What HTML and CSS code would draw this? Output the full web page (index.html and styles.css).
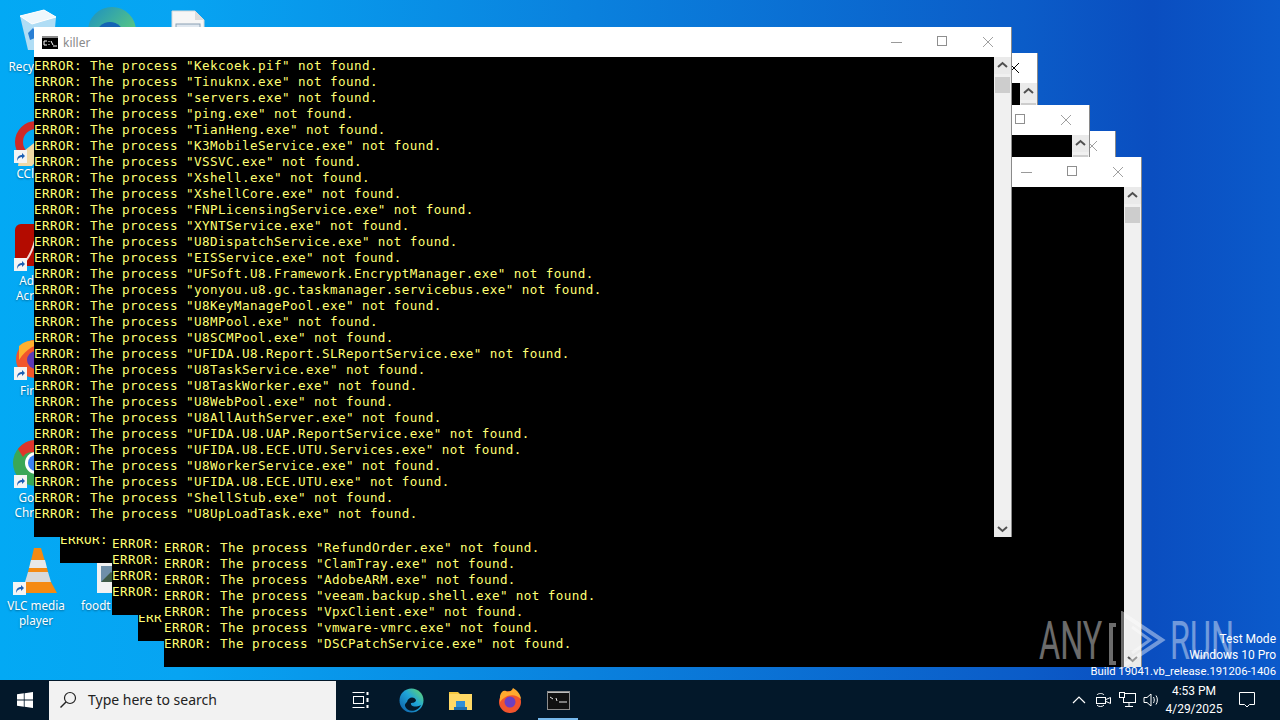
FILE: index.html
```html
<!DOCTYPE html>
<html lang="en">
<head>
    <meta charset="UTF-8">
    <title>killer</title>
    <link rel="stylesheet" href="styles.css">
</head>
<body>

    <div class="desktop">

        <div class="desk-icon clipped icon-bin">
            <svg width="40" height="42" viewBox="0 0 40 42">
                <path d="M2 7 L26 1 L38 8 L35 41 L10 41 Z" fill="#cfe6f5" fill-opacity="0.85"/>
                <path d="M2 7 L26 1 L38 8 L14 15 Z" fill="#eef7fc" stroke="#ffffff"/>
                <path d="M10 24 L15 19 L19 24 L16 25 L17 29 L12 31 Z" fill="#2a7fd4"/>
                <path d="M20 22 L25 24 L24 30 L19 30 Z" fill="#2a7fd4"/>
            </svg>
            <span>Recy</span>
        </div>

        <div class="desk-icon icon-edge">
            <svg width="50" height="50" viewBox="0 0 50 50">
                <defs>
                    <linearGradient id="edgeTop" x1="0" y1="0" x2="1" y2="1">
                        <stop offset="0" stop-color="#1b8fc4"/>
                        <stop offset="1" stop-color="#6fdc6a"/>
                    </linearGradient>
                </defs>
                <circle cx="25" cy="25" r="24" fill="url(#edgeTop)"/>
                <circle cx="23" cy="30" r="14" fill="#1464b4"/>
            </svg>
        </div>

        <div class="desk-icon icon-doc">
            <svg width="34" height="40" viewBox="0 0 34 40">
                <path d="M1 1 H24 L33 10 V39 H1 Z" fill="#f6f6f6" stroke="#d8d8d8"/>
                <path d="M24 1 V10 H33" fill="#dcdcdc"/>
                <rect x="5" y="14" width="24" height="16" fill="#dfe7ef" stroke="#8aa0b4"/>
            </svg>
        </div>

        <div class="desk-icon clipped icon-ccleaner">
            <svg class="tile" width="40" height="50" viewBox="0 0 40 50">
                <circle cx="24" cy="22" r="17" fill="none" stroke="#cf2a27" stroke-width="8"/>
                <path d="M8 34 L26 20 L34 30 L20 46 L6 46 Z" fill="#f1d9a6"/>
            </svg>
            <svg class="shortcut" width="13" height="13" viewBox="0 0 13 13"><rect width="13" height="13" fill="#f4f4f4"/><path d="M3 11 C3 7 5 5 8 5 V3 L11 6 L8 9 V7 C6 7 4 8 3 11 Z" fill="#1c5fb4"/></svg>
            <span>CCl</span>
        </div>

        <div class="desk-icon clipped icon-adobe">
            <svg class="tile" width="40" height="42" viewBox="0 0 40 42">
                <rect x="0" y="0" width="40" height="42" rx="6" fill="#b30b00"/>
                <path d="M10 38 C16 30 20 20 21 10" fill="none" stroke="#f3d9d5" stroke-width="2"/>
            </svg>
            <svg class="shortcut" width="13" height="13" viewBox="0 0 13 13"><rect width="13" height="13" fill="#f4f4f4"/><path d="M3 11 C3 7 5 5 8 5 V3 L11 6 L8 9 V7 C6 7 4 8 3 11 Z" fill="#1c5fb4"/></svg>
            <span>Ad<br>Acr</span>
        </div>

        <div class="desk-icon clipped icon-firefox">
            <svg class="tile" width="40" height="40" viewBox="0 0 40 40">
                <circle cx="20" cy="21" r="19" fill="#f2552c"/>
                <path d="M4 8 C10 2 22 0 30 6 C20 6 12 10 4 22 Z" fill="#ffb02e"/>
                <circle cx="21" cy="22" r="9" fill="#5b3bb5"/>
            </svg>
            <svg class="shortcut" width="13" height="13" viewBox="0 0 13 13"><rect width="13" height="13" fill="#f4f4f4"/><path d="M3 11 C3 7 5 5 8 5 V3 L11 6 L8 9 V7 C6 7 4 8 3 11 Z" fill="#1c5fb4"/></svg>
            <span>Fir</span>
        </div>

        <div class="desk-icon clipped icon-chrome">
            <svg class="tile" width="46" height="46" viewBox="0 0 46 46">
                <circle cx="23" cy="23" r="23" fill="#3aa757"/>
                <path d="M23 0 A23 23 0 0 1 44 14 L23 14 A9 9 0 0 0 10 17 L5 9 A23 23 0 0 1 23 0 Z" fill="#e0352b"/>
                <circle cx="23" cy="23" r="11" fill="#ffffff"/>
                <circle cx="23" cy="23" r="8" fill="#3c82f0"/>
            </svg>
            <svg class="shortcut" width="13" height="13" viewBox="0 0 13 13"><rect width="13" height="13" fill="#f4f4f4"/><path d="M3 11 C3 7 5 5 8 5 V3 L11 6 L8 9 V7 C6 7 4 8 3 11 Z" fill="#1c5fb4"/></svg>
            <span>Go<br>Chr</span>
        </div>

        <div class="desk-icon icon-vlc">
            <svg class="tile" width="38" height="46" viewBox="0 0 38 46">
                <path d="M15 0 H22 L27 17 H11 Z" fill="#f58a12"/>
                <path d="M12 12 H26 L28 20 H10 Z" fill="#e8e8e8"/>
                <path d="M9 24 H29 L32 34 H6 Z" fill="#d9d9d9"/>
                <path d="M10 20 H28 L29 24 H9 Z" fill="#f58a12"/>
                <path d="M6 34 H32 L38 45 H0 Z" fill="#f58a12"/>
            </svg>
            <svg class="shortcut" width="13" height="13" viewBox="0 0 13 13"><rect width="13" height="13" fill="#f4f4f4"/><path d="M3 11 C3 7 5 5 8 5 V3 L11 6 L8 9 V7 C6 7 4 8 3 11 Z" fill="#1c5fb4"/></svg>
            <span>VLC media<br>player</span>
        </div>

        <div class="desk-icon icon-food">
            <svg class="tile" width="34" height="30" viewBox="0 0 34 30">
                <rect width="34" height="30" fill="#f2f2f2"/>
                <rect x="4" y="3" width="26" height="16" fill="#6f8fa8"/>
                <path d="M4 19 L14 9 L22 16 L30 11 V19 Z" fill="#3f5a46"/>
            </svg>
            <span>foodt</span>
        </div>

        <div class="window win-2">
            <div class="titlebar">
                <div class="win-buttons">
                    <span class="btn-min"></span>
                    <span class="btn-max"></span>
                    <svg class="btn-close dark" width="46" height="30" viewBox="0 0 46 30"><path d="M18 10 L28 20 M28 10 L18 20"/></svg>
                </div>
            </div>
            <div class="console">
                <div class="log">
                    <p>ERROR:</p>
                    <p>&nbsp;</p>
                </div>
                <div class="scrollbar">
                    <svg class="arrow" width="17" height="17" viewBox="0 0 17 17"><path d="M4 10 L8.500 6 L13 10"/></svg>
                    <div class="thumb"></div>
                    <svg class="arrow" width="17" height="17" viewBox="0 0 17 17"><path d="M4 7 L8.500 11 L13 7"/></svg>
                </div>
            </div>
        </div>

        <div class="window win-4">
            <div class="titlebar">
                <div class="win-buttons">
                    <span class="btn-min"></span>
                    <span class="btn-max"></span>
                    <svg class="btn-close" width="46" height="30" viewBox="0 0 46 30"><path d="M18 10 L28 20 M28 10 L18 20"/></svg>
                </div>
            </div>
            <div class="console">
                <div class="log">
                    <p>ERR</p>
                    <p>&nbsp;</p>
                </div>
                <div class="scrollbar">
                    <svg class="arrow" width="17" height="17" viewBox="0 0 17 17"><path d="M4 10 L8.500 6 L13 10"/></svg>
                    <div class="thumb"></div>
                    <svg class="arrow" width="17" height="17" viewBox="0 0 17 17"><path d="M4 7 L8.500 11 L13 7"/></svg>
                </div>
            </div>
        </div>

        <div class="window win-3">
            <div class="titlebar">
                <div class="win-buttons">
                    <span class="btn-min"></span>
                    <span class="btn-max"></span>
                    <svg class="btn-close" width="46" height="30" viewBox="0 0 46 30"><path d="M18 10 L28 20 M28 10 L18 20"/></svg>
                </div>
            </div>
            <div class="console">
                <div class="log">
                    <p>ERROR:</p>
                    <p>ERROR:</p>
                    <p>ERROR:</p>
                    <p>ERROR:</p>
                    <p>&nbsp;</p>
                </div>
                <div class="scrollbar">
                    <svg class="arrow" width="17" height="17" viewBox="0 0 17 17"><path d="M4 10 L8.500 6 L13 10"/></svg>
                    <div class="thumb"></div>
                    <svg class="arrow" width="17" height="17" viewBox="0 0 17 17"><path d="M4 7 L8.500 11 L13 7"/></svg>
                </div>
            </div>
        </div>

        <div class="window win-5">
            <div class="titlebar">
                <div class="win-buttons">
                    <span class="btn-min"></span>
                    <span class="btn-max"></span>
                    <svg class="btn-close" width="46" height="30" viewBox="0 0 46 30"><path d="M18 10 L28 20 M28 10 L18 20"/></svg>
                </div>
            </div>
            <div class="console">
                <div class="log">
                    <p>ERROR: The process "RefundOrder.exe" not found.</p>
                    <p>ERROR: The process "ClamTray.exe" not found.</p>
                    <p>ERROR: The process "AdobeARM.exe" not found.</p>
                    <p>ERROR: The process "veeam.backup.shell.exe" not found.</p>
                    <p>ERROR: The process "VpxClient.exe" not found.</p>
                    <p>ERROR: The process "vmware-vmrc.exe" not found.</p>
                    <p>ERROR: The process "DSCPatchService.exe" not found.</p>
                    <p>&nbsp;</p>
                </div>
                <div class="scrollbar">
                    <svg class="arrow" width="17" height="17" viewBox="0 0 17 17"><path d="M4 10 L8.500 6 L13 10"/></svg>
                    <div class="thumb"></div>
                    <svg class="arrow" width="17" height="17" viewBox="0 0 17 17"><path d="M4 7 L8.500 11 L13 7"/></svg>
                </div>
            </div>
        </div>

        <div class="window win-1">
            <div class="titlebar">
                <svg class="cmd-icon" width="16" height="13" viewBox="0 0 16 13">
                    <rect width="16" height="13" fill="#000"/>
                    <rect y="0" width="16" height="2" fill="#8a8a8a"/>
                    <path d="M2 5 H5 M2 5 V9 M2 9 H5 M7 5 V6 M7 8 V9 M9 5 L11 9 M11 10 H15" stroke="#fff" fill="none"/>
                </svg>
                <span class="win-title">killer</span>
                <div class="win-buttons">
                    <span class="btn-min"></span>
                    <span class="btn-max"></span>
                    <svg class="btn-close" width="46" height="30" viewBox="0 0 46 30"><path d="M18 10 L28 20 M28 10 L18 20"/></svg>
                </div>
            </div>
            <div class="console">
                <div class="log">
                    <p>ERROR: The process "Kekcoek.pif" not found.</p>
                    <p>ERROR: The process "Tinuknx.exe" not found.</p>
                    <p>ERROR: The process "servers.exe" not found.</p>
                    <p>ERROR: The process "ping.exe" not found.</p>
                    <p>ERROR: The process "TianHeng.exe" not found.</p>
                    <p>ERROR: The process "K3MobileService.exe" not found.</p>
                    <p>ERROR: The process "VSSVC.exe" not found.</p>
                    <p>ERROR: The process "Xshell.exe" not found.</p>
                    <p>ERROR: The process "XshellCore.exe" not found.</p>
                    <p>ERROR: The process "FNPLicensingService.exe" not found.</p>
                    <p>ERROR: The process "XYNTService.exe" not found.</p>
                    <p>ERROR: The process "U8DispatchService.exe" not found.</p>
                    <p>ERROR: The process "EISService.exe" not found.</p>
                    <p>ERROR: The process "UFSoft.U8.Framework.EncryptManager.exe" not found.</p>
                    <p>ERROR: The process "yonyou.u8.gc.taskmanager.servicebus.exe" not found.</p>
                    <p>ERROR: The process "U8KeyManagePool.exe" not found.</p>
                    <p>ERROR: The process "U8MPool.exe" not found.</p>
                    <p>ERROR: The process "U8SCMPool.exe" not found.</p>
                    <p>ERROR: The process "UFIDA.U8.Report.SLReportService.exe" not found.</p>
                    <p>ERROR: The process "U8TaskService.exe" not found.</p>
                    <p>ERROR: The process "U8TaskWorker.exe" not found.</p>
                    <p>ERROR: The process "U8WebPool.exe" not found.</p>
                    <p>ERROR: The process "U8AllAuthServer.exe" not found.</p>
                    <p>ERROR: The process "UFIDA.U8.UAP.ReportService.exe" not found.</p>
                    <p>ERROR: The process "UFIDA.U8.ECE.UTU.Services.exe" not found.</p>
                    <p>ERROR: The process "U8WorkerService.exe" not found.</p>
                    <p>ERROR: The process "UFIDA.U8.ECE.UTU.exe" not found.</p>
                    <p>ERROR: The process "ShellStub.exe" not found.</p>
                    <p>ERROR: The process "U8UpLoadTask.exe" not found.</p>
                    <p>&nbsp;</p>
                </div>
                <div class="scrollbar">
                    <svg class="arrow" width="17" height="17" viewBox="0 0 17 17"><path d="M4 10 L8.500 6 L13 10"/></svg>
                    <div class="thumb"></div>
                    <svg class="arrow" width="17" height="17" viewBox="0 0 17 17"><path d="M4 7 L8.500 11 L13 7"/></svg>
                </div>
            </div>
        </div>

        <div class="watermark">
            <span class="wm-text wm-any">ANY</span>
            <svg class="wm-logo" width="62" height="58" viewBox="0 0 62 58">
                <path d="M10 14 H5 V52 H10" fill="none" stroke="#fff" stroke-width="4"/>
                <path d="M17 3 L56 29 L17 55 Z" fill="none" stroke="#fff" stroke-width="4"/>
                <path d="M26 16 L44 29 L26 42" fill="none" stroke="#fff" stroke-width="3"/>
            </svg>
            <span class="wm-text wm-run">RUN</span>
        </div>

        <div class="build-info">
            <p>Test Mode</p>
            <p>Windows 10 Pro</p>
            <p class="build-line">Build 19041.vb_release.191206-1406</p>
        </div>
    </div>

    <div class="taskbar">
        <div class="start">
            <svg width="16" height="16" viewBox="0 0 16 16"><path d="M0 2.300 L6.800 1.300 V7.500 H0 Z M7.600 1.200 L16 0 V7.500 H7.600 Z M0 8.400 H6.800 V14.700 L0 13.700 Z M7.600 8.400 H16 V16 L7.600 14.800 Z" fill="#fff"/></svg>
        </div>
        <div class="search">
            <svg width="18" height="18" viewBox="0 0 18 18"><circle cx="11" cy="7" r="5.500" fill="none" stroke="#222" stroke-width="1.200"/><path d="M7 11 L1.500 16.500" stroke="#222" stroke-width="1.400"/></svg>
            <span>Type here to search</span>
        </div>
        <div class="task-btn task-view">
            <svg width="17" height="16" viewBox="0 0 17 16" fill="none" stroke="#fff"><path d="M0.500 0.500 H12.500 M0.500 15.500 H12.500"/><rect x="1.500" y="4.500" width="10" height="7"/><path d="M15.500 0 V3 M15.500 6 V10 M15.500 13 V16" stroke-width="2"/></svg>
        </div>
        <div class="task-btn">
            <svg width="25" height="25" viewBox="0 0 25 25">
                <defs>
                    <linearGradient id="edgeBar" x1="0" y1="1" x2="1" y2="0">
                        <stop offset="0" stop-color="#0c59a4"/>
                        <stop offset="0.55" stop-color="#1fa5d8"/>
                        <stop offset="1" stop-color="#6bdb63"/>
                    </linearGradient>
                </defs>
                <circle cx="12.500" cy="12.500" r="12" fill="url(#edgeBar)"/>
                <path d="M8 14 C9 9 15 8 17 12 C17 15 12 15 12 15 C11 18 16 20 22 17 C19 24 8 25 6 18 C5.500 16 7 15 8 14 Z" fill="#03182a"/>
            </svg>
        </div>
        <div class="task-btn">
            <svg width="23" height="21" viewBox="0 0 23 21">
                <path d="M0 2 H9 L11 4 H23 V20 H0 Z" fill="#f5c83f"/>
                <rect x="0" y="4" width="23" height="16" fill="#ffd966"/>
                <rect x="7" y="11" width="9" height="6" fill="#2f8fd8"/>
                <rect x="5" y="17" width="13" height="3" fill="#1f6fb0"/>
            </svg>
        </div>
        <div class="task-btn">
            <svg width="24" height="25" viewBox="0 0 24 25">
                <circle cx="12" cy="14" r="11" fill="#f2542d"/>
                <path d="M2 8 C3 4 5 2 8 3 C10 5 14 3 15 0 C19 2 23 7 23 11 C17 5 8 6 2 14 Z" fill="#ffa92e"/>
                <circle cx="12" cy="14" r="5.500" fill="#6d3fc0"/>
            </svg>
        </div>
        <div class="task-btn active">
            <svg width="23" height="19" viewBox="0 0 23 19">
                <rect width="23" height="19" fill="#111"/>
                <rect width="23" height="2" fill="#bdbdbd"/>
                <rect x="0.500" y="0.500" width="22" height="18" fill="none" stroke="#8d8d8d"/>
                <path d="M3 6 L6 8 M9 7 L10 10 M12 11 H20" stroke="#e8e8e8"/>
            </svg>
        </div>

        <div class="tray">
            <svg class="tray-chevron" width="14" height="8" viewBox="0 0 14 8"><path d="M1 7 L7 1 L13 7" fill="none" stroke="#fff" stroke-width="1.200"/></svg>
            <svg class="tray-icon" width="17" height="18" viewBox="0 0 17 18" fill="none" stroke="#fff"><path d="M2 4 C3 2 8 2 9 4 M2 14 C3 16 8 16 9 14"/><rect x="1.500" y="6.500" width="9" height="6"/><path d="M11 8.500 L15.500 6.500 V12.500 L11 10.500"/></svg>
            <svg class="tray-icon" width="17" height="16" viewBox="0 0 17 16" fill="none" stroke="#fff"><rect x="4.500" y="1.500" width="12" height="9"/><rect x="0.500" y="0.500" width="5" height="5" fill="#03182a"/><path d="M10 10.500 V14 M6 14.500 H14"/></svg>
            <svg class="tray-icon" width="17" height="16" viewBox="0 0 17 16" fill="none" stroke="#fff"><path d="M1 5.500 H4 L8 2 V14 L4 10.500 H1 Z"/><path d="M10.500 5 C11.500 7 11.500 9 10.500 11 M13 3.500 C14.800 6 14.800 10 13 12.500"/></svg>
            <div class="clock">
                <span>4:53 PM</span>
                <span>4/29/2025</span>
            </div>
            <svg class="tray-note" width="16" height="16" viewBox="0 0 16 16"><path d="M0.500 0.500 H15.500 V12.500 H10.500 L8 15 L5.500 12.500 H0.500 Z" fill="none" stroke="#fff"/></svg>
        </div>
    </div>

</body>
</html>
```

FILE: styles.css
```css
html, body {
    margin: 0;
    height: 100%;
}
body {
    display: flex;
    flex-direction: column;
    width: 1280px;
    height: 720px;
    overflow: hidden;
    font-family: "Noto Sans", "Open Sans", sans-serif;
}
p {
    margin: 0;
}
.desktop {
    position: relative;
    flex: 1;
    overflow: hidden;
    background: linear-gradient(90deg, #03a9f4 0%, #07a4f2 14%, #0a82de 45%, #0b5cc8 80%, #0a4ec0 90%, #0b5acb 100%);
}

/* desktop icons */
.desk-icon {
    position: absolute;
    width: 76px;
    display: flex;
    flex-direction: column;
    align-items: center;
    color: #fff;
    font-size: 11.700px;
    line-height: 15px;
    text-align: center;
    text-shadow: 0 1px 2px rgba(0, 0, 0, 0.4);
}
.desk-icon span {
    position: absolute;
    left: 0;
    right: 0;
}
.desk-icon .shortcut {
    position: absolute;
}
.desk-icon .tile {
    position: absolute;
}
/* labels that run under the console windows stop at the window edge */
.desk-icon.clipped {
    width: 36px;
    align-items: flex-start;
}
.desk-icon.clipped span {
    text-align: right;
}
.icon-bin { left: -2px; top: 9px; }
.icon-bin svg { margin-left: 20px; }
.icon-bin span { top: 50px; }
.icon-edge { left: 74px; top: 6px; }
.icon-doc { left: 150px; top: 10px; }
.icon-ccleaner { left: -2px; top: 120px; }
.icon-ccleaner .tile { left: 14px; top: 0; }
.icon-ccleaner .shortcut { left: 16px; top: 30px; }
.icon-ccleaner span { top: 46px; }
.icon-adobe { left: -2px; top: 224px; }
.icon-adobe .tile { left: 17px; top: 0; }
.icon-adobe .shortcut { left: 16px; top: 34px; }
.icon-adobe span { top: 49px; }
.icon-firefox { left: -2px; top: 338px; }
.icon-firefox .tile { left: 17px; top: 0; }
.icon-firefox .shortcut { left: 16px; top: 29px; }
.icon-firefox span { top: 45px; }
.icon-chrome { left: -2px; top: 440px; }
.icon-chrome .tile { left: 15px; top: 0; }
.icon-chrome .shortcut { left: 16px; top: 35px; }
.icon-chrome span { top: 50px; }
.icon-vlc { left: -2px; top: 548px; }
.icon-vlc .tile { left: 21px; top: 0; }
.icon-vlc .shortcut { left: 15px; top: 34px; }
.icon-vlc span { top: 50px; }
.icon-food { left: 79px; top: 563px; width: 33px; }
.icon-food .tile { left: 18px; top: 0; }
.icon-food span { top: 35px; text-align: left; left: 2px; }

/* console windows */
.window {
    position: absolute;
    width: 977px;
    height: 510px;
    display: flex;
    flex-direction: column;
    background: #fff;
    box-shadow: 1px 0 0 #8a8a8a;
}
.win-1 { left: 34px; top: 27px; }
.win-2 { left: 60px; top: 53px; }
.win-3 { left: 112px; top: 105px; }
.win-4 { left: 138px; top: 131px; }
.win-5 { left: 164px; top: 157px; }
.titlebar {
    flex: none;
    height: 30px;
    display: flex;
    align-items: center;
    padding-left: 8px;
    color: #8a8a8a;
    font-size: 12px;
}
.cmd-icon {
    margin-right: 5px;
}
.win-buttons {
    margin-left: auto;
    display: flex;
    align-items: center;
}
.btn-min, .btn-max {
    position: relative;
    width: 46px;
    height: 30px;
}
.btn-min::before {
    content: "";
    position: absolute;
    left: 18px;
    top: 15px;
    width: 11px;
    height: 1px;
    background: #9a9a9a;
}
.btn-max::before {
    content: "";
    position: absolute;
    left: 18px;
    top: 9px;
    width: 8px;
    height: 8px;
    border: 1px solid #8f8f8f;
}
.btn-close path {
    stroke: #a0a0a0;
    stroke-width: 1;
    fill: none;
}
.btn-close.dark path {
    stroke: #000;
}
.console {
    flex: 1;
    display: flex;
    min-height: 0;
    background: #000;
}
.log {
    flex: 1;
    display: flex;
    flex-direction: column;
    justify-content: flex-end;
    overflow: hidden;
    color: #ffff74;
    font-family: "DejaVu Sans Mono", monospace;
    font-size: 12.600px;
    letter-spacing: 0.415px;
    line-height: 16px;
    white-space: pre;
}
.log p:last-child {
    height: 15px;
}
.scrollbar {
    flex: none;
    width: 17px;
    display: flex;
    flex-direction: column;
    background: #f0f0f0;
}
.arrow {
    display: block;
    flex: none;
    background: #eaeaea;
}
.arrow path {
    fill: none;
    stroke: #505050;
    stroke-width: 2;
}
.thumb {
    flex: none;
    height: 16px;
    margin: 3px 1px auto 1px;
    background: #cdcdcd;
}

/* watermark and build text */
.watermark {
    position: absolute;
    left: 1038px;
    top: 610px;
    width: 200px;
    height: 60px;
    opacity: 0.42;
}
.wm-text {
    position: absolute;
    top: 1px;
    color: #fff;
    font-family: "Roboto", sans-serif;
    font-size: 54px;
    line-height: 60px;
    transform: scaleX(0.6);
    transform-origin: left center;
}
.wm-any { left: 1px; }
.wm-run { left: 132px; }
.wm-logo {
    position: absolute;
    left: 68px;
    top: 1px;
}
.build-info {
    position: absolute;
    right: 4px;
    top: 631px;
    color: #fff;
    font-family: "Roboto", sans-serif;
    font-size: 12px;
    line-height: 16px;
    text-align: right;
}
.build-line {
    margin-top: 1px;
    font-size: 11.300px;
}

/* taskbar */
.taskbar {
    flex: none;
    height: 40px;
    display: flex;
    align-items: center;
    background: #03182a;
    color: #fff;
}
.start {
    width: 49px;
    height: 40px;
    display: flex;
    align-items: center;
    justify-content: center;
}
.search {
    width: 287px;
    height: 39px;
    margin-top: 1px;
    padding: 0 0 2px 10px;
    display: flex;
    align-items: center;
    gap: 11px;
    box-sizing: border-box;
    background: #f2f2f2;
    color: #222;
    font-size: 14px;
}
.task-btn {
    position: relative;
    width: 49px;
    height: 40px;
    display: flex;
    align-items: center;
    justify-content: center;
}
.task-view {
    width: 48px;
    margin-right: 3px;
}
.task-btn.active::after {
    content: "";
    position: absolute;
    left: 4px;
    right: 5px;
    bottom: 0;
    height: 2px;
    background: #76b9ed;
}
.tray {
    margin-left: auto;
    display: flex;
    align-items: center;
    height: 40px;
}
.tray-chevron {
    margin-right: 9px;
}
.tray-icon {
    margin-right: 7px;
}
.clock {
    width: 66px;
    margin-left: -6px;
    display: flex;
    flex-direction: column;
    align-items: center;
    font-family: "Roboto", sans-serif;
    font-size: 12px;
    line-height: 18px;
}
.tray-note {
    margin-left: 12px;
    margin-right: 25px;
}
```
